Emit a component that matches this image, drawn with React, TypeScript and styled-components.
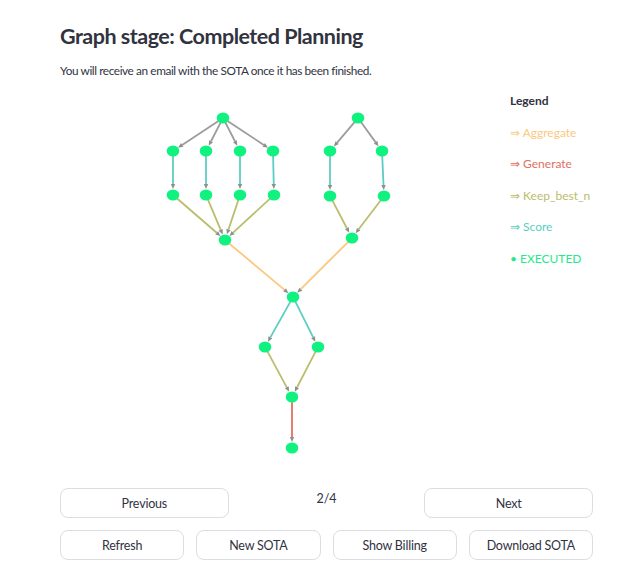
import React from "react";
import styled, { createGlobalStyle } from "styled-components";

const Global = createGlobalStyle`
  html, body { margin: 0; padding: 0; background: #ffffff; }
  body { font-family: "Lato", "Noto Sans", sans-serif; color: #31333f; }
`;

const Page = styled.main`
  width: 533px;
  padding: 20px 0 0 60px;
  box-sizing: content-box;
`;

const Title = styled.h1`
  margin: 0;
  font-size: 21.5px;
  font-weight: 700;
  line-height: 32px;
  color: #31333f;
  letter-spacing: -0.5px;
`;

const Subtitle = styled.p`
  margin: 10px 0 0;
  font-size: 11.8px;
  line-height: 18px;
  color: #31333f;
  letter-spacing: -0.4px;
`;

const GraphRow = styled.section`
  display: flex;
  align-items: flex-start;
  margin-top: 6px;
  width: 583px;
`;

const GraphSvg = styled.svg`
  display: block;
  flex: none;
`;

const Legend = styled.ul`
  list-style: none;
  margin: 0;
  padding: 6px 0 0 10px;
  display: flex;
  flex-direction: column;
  gap: 13.5px;
  font-size: 12px;
  line-height: 18px;
`;

const LegendTitle = styled.li`
  font-weight: 700;
  color: #31333f;
`;

const LegendItem = styled.li<{ $color: string }>`
  color: ${(p) => p.$color};
`;

const NavRow = styled.div`
  display: grid;
  grid-template-columns: repeat(3, 1fr);
  column-gap: 13.5px;
  margin-top: 18px;
  align-items: start;
`;

const ActionRow = styled.div`
  display: grid;
  grid-template-columns: repeat(4, 1fr);
  column-gap: 12px;
  margin-top: 12px;
`;

const Button = styled.button`
  height: 30px;
  border: 1px solid #dcdde2;
  border-radius: 8px;
  background: #ffffff;
  color: #31333f;
  font-family: "Lato", "Noto Sans", sans-serif;
  font-size: 12.5px;
  letter-spacing: -0.2px;
  padding: 0 10px;
  cursor: pointer;
`;

const PageCount = styled.div`
  text-align: center;
  font-size: 12.5px;
  line-height: 18px;
  padding-top: 2px;
  color: #31333f;
`;

type P = [number, number];

const C = {
  gray: "#9c9c9c",
  score: "#5ccdc1",
  keep: "#bcbd6c",
  agg: "#fbc97e",
  gen: "#e0705f",
  node: "#0ff27f",
};

const nodes: Record<string, P> = {
  L0: [223, 118],
  A1: [173, 151], A2: [206, 151], A3: [240, 151], A4: [273, 151],
  B1: [173, 195], B2: [206, 195], B3: [240, 195], B4: [274, 195],
  LJ: [225, 240],
  R0: [358, 118],
  C1: [330, 151], C2: [382, 151],
  D1: [330, 196], D2: [384, 196],
  RJ: [352, 238],
  M: [293, 297],
  E1: [265, 347], E2: [318, 347],
  F: [292, 397],
  G: [292, 448],
};

const edges: [string, string, string][] = [
  ["L0", "A1", C.gray], ["L0", "A2", C.gray], ["L0", "A3", C.gray], ["L0", "A4", C.gray],
  ["A1", "B1", C.score], ["A2", "B2", C.score], ["A3", "B3", C.score], ["A4", "B4", C.score],
  ["B1", "LJ", C.keep], ["B2", "LJ", C.keep], ["B3", "LJ", C.keep], ["B4", "LJ", C.keep],
  ["R0", "C1", C.gray], ["R0", "C2", C.gray],
  ["C1", "D1", C.score], ["C2", "D2", C.score],
  ["D1", "RJ", C.keep], ["D2", "RJ", C.keep],
  ["LJ", "M", C.agg], ["RJ", "M", C.agg],
  ["M", "E1", C.score], ["M", "E2", C.score],
  ["E1", "F", C.keep], ["E2", "F", C.keep],
  ["F", "G", C.gen],
];

function Edge({ from, to, color }: { from: P; to: P; color: string }) {
  const dx = to[0] - from[0];
  const dy = to[1] - from[1];
  const len = Math.hypot(dx, dy);
  const ux = dx / len;
  const uy = dy / len;
  const sx = from[0] + ux * 5;
  const sy = from[1] + uy * 5;
  const tipX = to[0] - ux * 6;
  const tipY = to[1] - uy * 6;
  const baseX = tipX - ux * 5;
  const baseY = tipY - uy * 5;
  const px = -uy * 2.2;
  const py = ux * 2.2;
  return (
    <g>
      <line x1={sx} y1={sy} x2={baseX} y2={baseY} stroke={color} strokeWidth={1.8} />
      <polygon
        points={`${tipX},${tipY} ${baseX + px},${baseY + py} ${baseX - px},${baseY - py}`}
        fill="#8f8f8f"
      />
    </g>
  );
}

function Graph() {
  return (
    <GraphSvg width={440} height={384} viewBox="60 86 440 384">
      {edges.map(([a, b, c], i) => (
        <Edge key={i} from={nodes[a]} to={nodes[b]} color={c} />
      ))}
      {Object.entries(nodes).map(([k, [x, y]]) => (
        <ellipse key={k} cx={x} cy={y} rx={6.3} ry={5.5} fill={C.node} />
      ))}
    </GraphSvg>
  );
}

export default function App() {
  return (
    <>
      <Global />
      <Page>
        <Title>Graph stage: Completed Planning</Title>
        <Subtitle>You will receive an email with the SOTA once it has been finished.</Subtitle>
        <GraphRow>
          <Graph />
          <Legend>
            <LegendTitle>Legend</LegendTitle>
            <LegendItem $color={C.agg}>⇒ Aggregate</LegendItem>
            <LegendItem $color={C.gen}>⇒ Generate</LegendItem>
            <LegendItem $color={C.keep}>⇒ Keep_best_n</LegendItem>
            <LegendItem $color={C.score}>⇒ Score</LegendItem>
            <LegendItem $color="#27e88a">• EXECUTED</LegendItem>
          </Legend>
        </GraphRow>
        <NavRow>
          <Button>Previous</Button>
          <PageCount>2/4</PageCount>
          <Button>Next</Button>
        </NavRow>
        <ActionRow>
          <Button>Refresh</Button>
          <Button>New SOTA</Button>
          <Button>Show Billing</Button>
          <Button>Download SOTA</Button>
        </ActionRow>
      </Page>
    </>
  );
}
